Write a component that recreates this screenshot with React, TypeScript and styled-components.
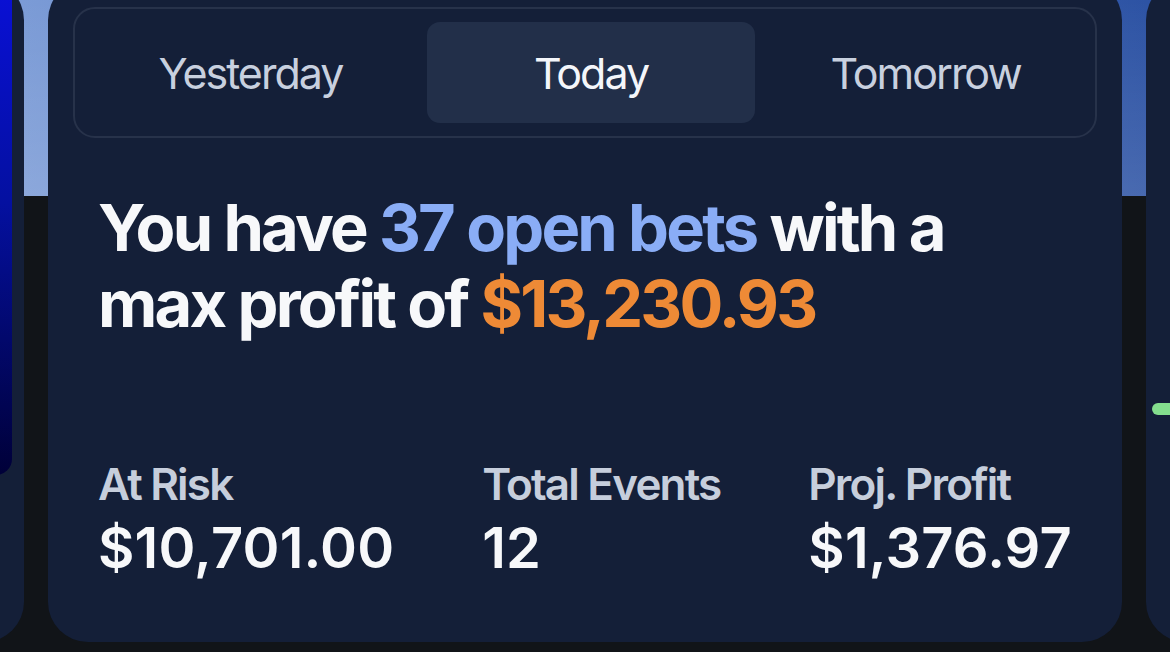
import React from "react";
import styled, { createGlobalStyle } from "styled-components";

const GlobalStyle = createGlobalStyle`
  html, body { margin: 0; padding: 0; }
  body {
    width: 1170px;
    height: 652px;
    overflow: hidden;
    font-family: Inter, "Noto Sans", "Liberation Sans", sans-serif;
    background:
      linear-gradient(to bottom, rgba(255,255,255,0), rgba(255,255,255,0.13)) top left / 100% 196px no-repeat,
      linear-gradient(to right, #7b9bd6 2%, #2d53a4 98%) top left / 100% 196px no-repeat,
      #111418;
  }
`;

const Track = styled.div`
  display: flex;
  gap: 24px;
  margin-left: -1050px;
  margin-top: -20px;
`;

const Card = styled.section`
  flex: 0 0 1074px;
  height: 662px;
  box-sizing: border-box;
  border-radius: 40px;
  background: #141f38;
  overflow: hidden;
  display: flex;
  flex-direction: column;
`;

const SideCard = styled(Card)<{ $side: "left" | "right" }>`
  padding: ${(p) => (p.$side === "left" ? "0 12px 0 0" : "423px 0 0 6px")};
`;

const Hero = styled.div`
  height: 495px;
  border-radius: 0 0 16px 0;
  background: linear-gradient(to bottom, #0a10d8 0%, #0410a0 45%, #000038 100%);
`;

const Pill = styled.div`
  width: 60px;
  height: 12px;
  border-radius: 6px;
  background: #84de8e;
`;

const MainCard = styled(Card)`
  padding: 27px 25px 62px;
`;

const Tabs = styled.div`
  display: grid;
  grid-template-columns: 325px 328px 1fr;
  gap: 14px;
  padding: 13px;
  border: 2px solid #27324a;
  border-radius: 22px;
`;

const Tab = styled.div<{ $active?: boolean }>`
  height: 101px;
  display: flex;
  align-items: center;
  justify-content: center;
  border-radius: 13px;
  background: ${(p) => (p.$active ? "#222f49" : "transparent")};
  color: ${(p) => (p.$active ? "#f4f6fa" : "#c8d0df")};
  font-size: 43px;
  font-weight: 400;
  letter-spacing: -2px;
`;

const Body = styled.div`
  flex: 1;
  display: flex;
  flex-direction: column;
  padding: 0 25px;
`;

const Headline = styled.h1`
  margin: 52px 0 0;
  font-size: 65px;
  line-height: 76px;
  font-weight: 700;
  letter-spacing: -2.8px;
  word-spacing: 0.5px;
  color: #f7f8fa;
`;

const Accent = styled.span<{ $tone: "blue" | "orange" }>`
  color: ${(p) => (p.$tone === "blue" ? "#8aadf6" : "#ee8a36")};
`;

const Stats = styled.div`
  margin-top: auto;
  display: flex;
  justify-content: space-between;
`;

const Stat = styled.div`
  display: flex;
  flex-direction: column;
  gap: 6px;
`;

const Label = styled.div`
  font-size: 44px;
  line-height: 52px;
  font-weight: 600;
  color: #c6cedc;
  letter-spacing: -1.8px;
`;

const Value = styled.div`
  font-size: 56px;
  line-height: 64px;
  font-weight: 600;
  color: #f7f8fa;
  letter-spacing: 0.2px;
`;

const stats = [
  { label: "At Risk", value: "$10,701.00" },
  { label: "Total Events", value: "12" },
  { label: "Proj. Profit", value: "$1,376.97" },
];

export default function App() {
  return (
    <>
      <GlobalStyle />
      <Track>
        <SideCard $side="left">
          <Hero />
        </SideCard>
        <MainCard>
          <Tabs>
            <Tab>Yesterday</Tab>
            <Tab $active>Today</Tab>
            <Tab>Tomorrow</Tab>
          </Tabs>
          <Body>
            <Headline>
              You have <Accent $tone="blue">37 open bets</Accent> with a
              <br />
              max profit of <Accent $tone="orange">$13,230.93</Accent>
            </Headline>
            <Stats>
              {stats.map((s) => (
                <Stat key={s.label}>
                  <Label>{s.label}</Label>
                  <Value>{s.value}</Value>
                </Stat>
              ))}
            </Stats>
          </Body>
        </MainCard>
        <SideCard $side="right">
          <Pill />
        </SideCard>
      </Track>
    </>
  );
}
